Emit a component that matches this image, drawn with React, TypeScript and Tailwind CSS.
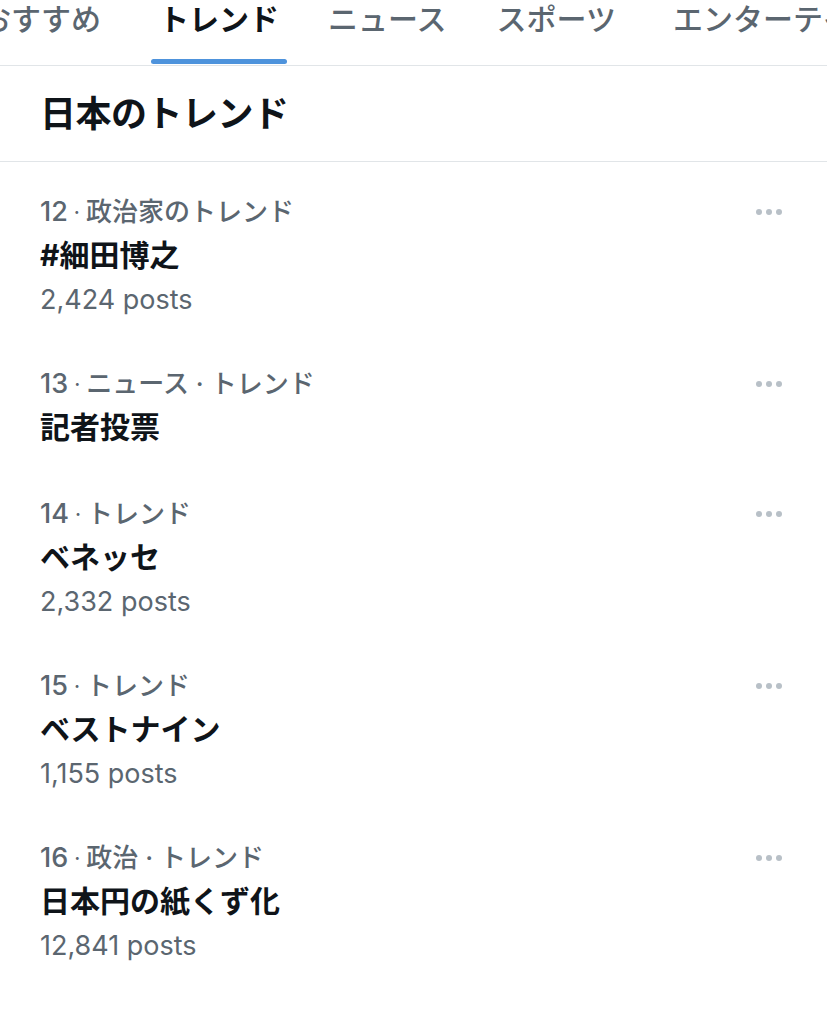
import React from "react";

const tabs = [
  { label: "おすすめ", ml: "ml-[-19px]" },
  { label: "トレンド", ml: "ml-[50px]" },
  { label: "ニュース", ml: "ml-[41px]" },
  { label: "スポーツ", ml: "ml-[50px]" },
  { label: "エンターテイメント", ml: "ml-[57px]" },
];

const trends = [
  { rank: 12, meta: "政治家のトレンド", title: "#細田博之", posts: "2,424 posts" },
  { rank: 13, meta: "ニュース · トレンド", title: "記者投票", posts: "" },
  { rank: 14, meta: "トレンド", title: "ベネッセ", posts: "2,332 posts" },
  { rank: 15, meta: "トレンド", title: "ベストナイン", posts: "1,155 posts" },
  { rank: 16, meta: "政治 · トレンド", title: "日本円の紙くず化", posts: "12,841 posts" },
];

const font = { fontFamily: 'Inter, "Noto Sans CJK JP", sans-serif' };

const Dots = () => (
  <div className="flex items-center gap-[4px] pt-[19px]">
    <span className="w-[6px] h-[6px] rounded-full bg-[#b8c0c7]" />
    <span className="w-[6px] h-[6px] rounded-full bg-[#b8c0c7]" />
    <span className="w-[6px] h-[6px] rounded-full bg-[#b8c0c7]" />
  </div>
);

export default function App() {
  return (
    <div className="w-[827px] h-[1017px] bg-white overflow-hidden" style={font}>
      <div className="flex h-[66px] border-b border-[#e1e5e8] whitespace-nowrap">
        {tabs.map((t) => {
          const active = t.label === "トレンド";
          return (
            <div key={t.label} className={"flex flex-col items-center shrink-0 " + t.ml}>
              <div
                className={
                  "text-[30px] leading-[38px] " +
                  (active ? "font-bold text-[#0f1419]" : "font-medium text-[#5b6670]")
                }
              >
                {t.label}
              </div>
              {active ? (
                <div className="mt-[21px] w-[136px] h-[5px] rounded-full bg-[#4e93dc]" />
              ) : null}
            </div>
          );
        })}
      </div>

      <div className="h-[96px] border-b border-[#e1e5e8] px-[40px] flex items-center">
        <h1 className="text-[36px] font-bold text-[#0f1419] tracking-[-0.5px]">日本のトレンド</h1>
      </div>

      <div className="pt-[6px]">
        {trends.map((tr) => (
          <div key={tr.rank} className="flex items-start justify-between pl-[40px] pr-[45px] pt-[22px] pb-[20px]">
            <div className="flex flex-col">
              <div className="flex items-center h-[43px] text-[26px] leading-none text-[#5b6670] font-medium whitespace-nowrap">
                <span className="text-[27px]">{tr.rank}</span>
                <span className="text-[20px] mx-[6px]">·</span>
                <span>{tr.meta}</span>
              </div>
              <div className="h-[45px] text-[30px] leading-[45px] font-bold text-[#0f1419]">{tr.title}</div>
              {tr.posts ? (
                <div className="h-[42px] text-[27px] leading-[43px] text-[#5b6670]">{tr.posts}</div>
              ) : null}
            </div>
            <Dots />
          </div>
        ))}
      </div>
    </div>
  );
}
